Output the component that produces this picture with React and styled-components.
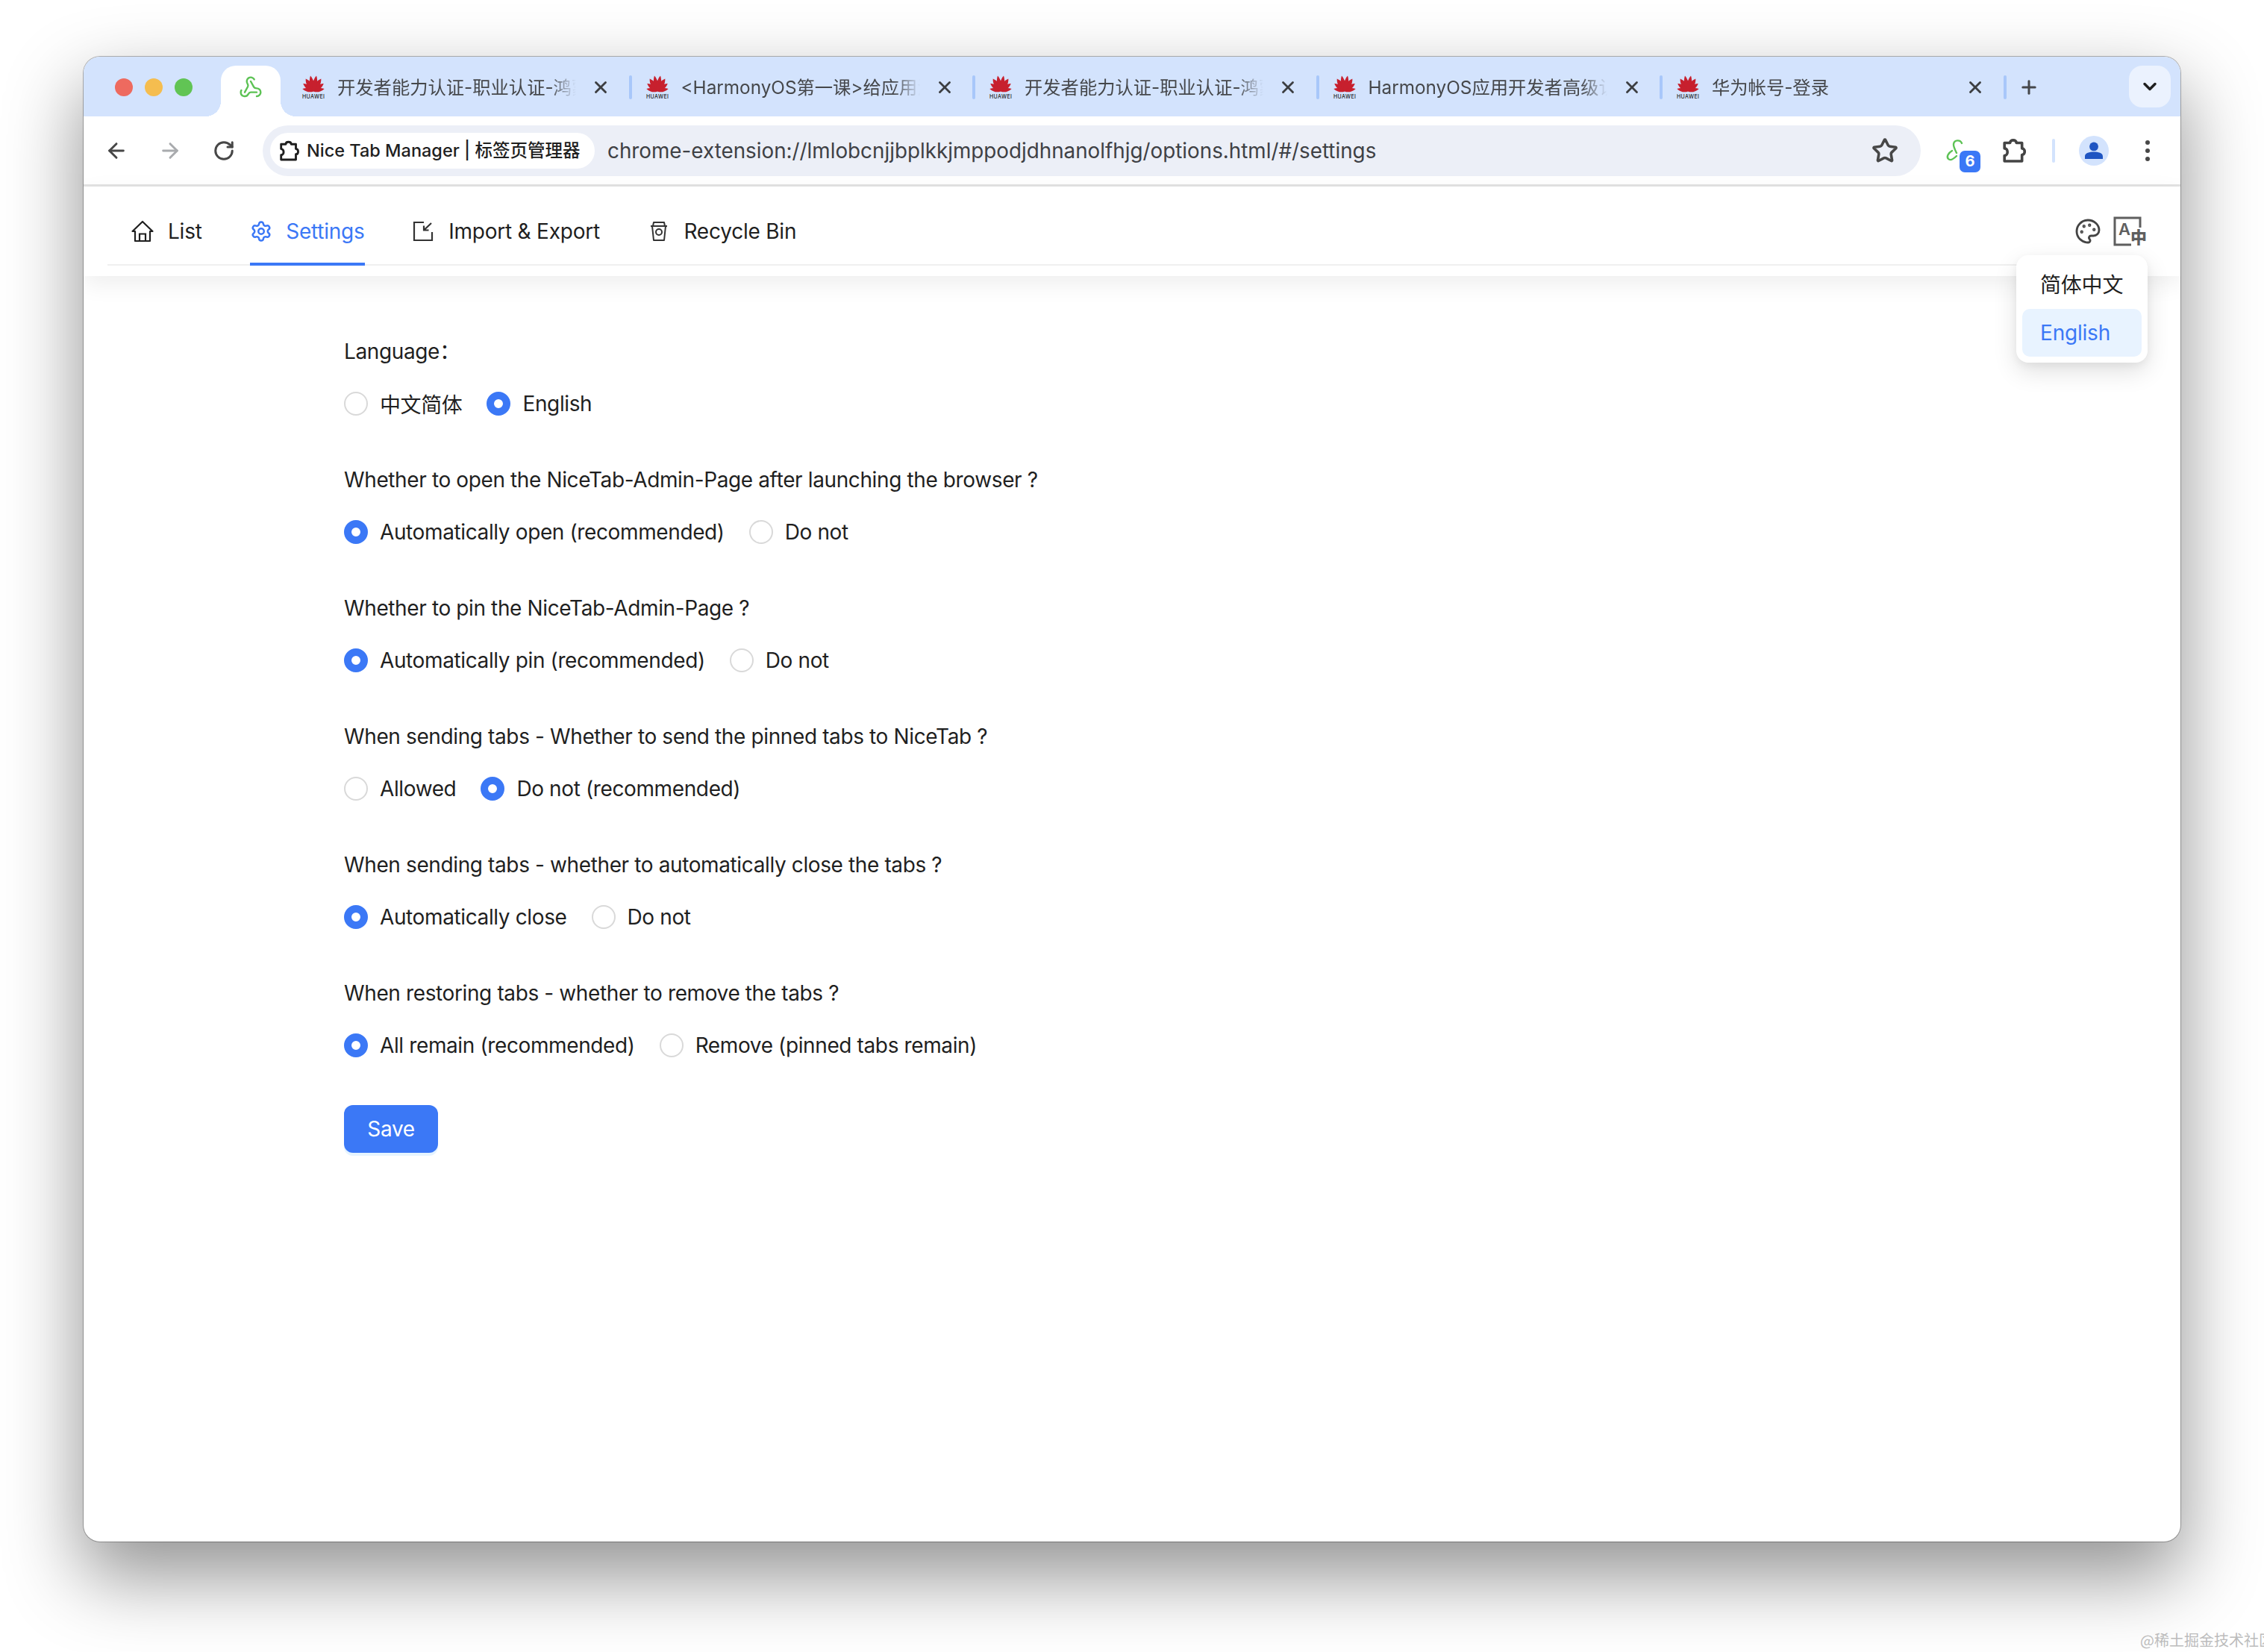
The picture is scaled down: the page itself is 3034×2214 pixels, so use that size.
import React from 'react';
import styled, { createGlobalStyle } from 'styled-components';
import {
  ArrowLeft, ArrowRight, RotateCw, Star, X, Plus, ChevronDown, Webhook, Settings, Palette,
} from 'lucide-react';

const BLUE = '#3b78f6';
const UI_FONT = 'Inter, "Noto Sans CJK SC", sans-serif';
const CHROME_FONT = 'Inter, "Noto Sans CJK SC", sans-serif';

const GlobalStyle = createGlobalStyle`
  html, body {
    margin: 0;
    padding: 0;
    background: #fff;
  }
  body {
    width: 3034px;
    height: 2214px;
    overflow: hidden;
    position: relative;
    font-family: ${UI_FONT};
  }
`;

const Desktop = styled.div`
  width: 3034px;
  height: 2214px;
  padding: 76px 0 0 112px;
  box-sizing: border-box;
`;

const Window = styled.div`
  width: 2810px;
  height: 1990px;
  border-radius: 22px;
  background: #fff;
  overflow: hidden;
  box-shadow: 0 0 0 1px rgba(0, 0, 0, 0.28), 0 44px 100px 4px rgba(0, 0, 0, 0.42);
`;

const TabStrip = styled.div`
  height: 80px;
  background: #d3e3fd;
  display: flex;
  align-items: flex-start;
  padding-top: 12px;
  box-sizing: border-box;
`;

const Lights = styled.div`
  width: 184px;
  height: 58px;
  display: flex;
  align-items: center;
  gap: 16px;
  padding-left: 42px;
  box-sizing: border-box;
`;

const Light = styled.span`
  width: 24px;
  height: 24px;
  border-radius: 50%;
  background: ${p => p.$color};
`;

const ActiveTab = styled.div`
  width: 80px;
  height: 68px;
  background: #fff;
  border-radius: 20px 20px 0 0;
  position: relative;
  display: flex;
  justify-content: center;
  padding-top: 13px;
  box-sizing: border-box;
  color: #5cc254;

  &::before, &::after {
    content: '';
    position: absolute;
    bottom: 0;
    width: 20px;
    height: 20px;
    background: #fff;
  }
  &::before {
    left: -20px;
    -webkit-mask: radial-gradient(circle 20px at 0 0, transparent 99%, #000 100%);
  }
  &::after {
    right: -20px;
    -webkit-mask: radial-gradient(circle 20px at 100% 0, transparent 99%, #000 100%);
  }
`;

const Tab = styled.div`
  width: 460.5px;
  height: 58px;
  flex: none;
  display: flex;
  align-items: center;
  padding-left: 18px;
  box-sizing: border-box;
  position: relative;
  color: #45474a;
`;

const FirstTabGap = styled.div`
  width: 10px;
  flex: none;
`;

const Title = styled.span`
  width: 320px;
  margin-left: 16px;
  overflow: hidden;
  white-space: nowrap;
  font: 400 24.3px/46px ${CHROME_FONT};
  -webkit-mask: linear-gradient(to right, #000 285px, transparent 320px);
`;

const TabClose = styled.span`
  margin-left: 20px;
  width: 26px;
  height: 26px;
  display: flex;
  align-items: center;
  justify-content: center;
  color: #3c3e41;
`;

const TabSep = styled.span`
  position: absolute;
  right: 0;
  top: 13px;
  width: 4px;
  height: 32px;
  border-radius: 2px;
  background: #a8c7fa;
`;

const NewTab = styled.div`
  width: 28px;
  height: 58px;
  margin-left: 16px;
  display: flex;
  align-items: center;
  color: #45474a;
`;

const ListButton = styled.div`
  width: 56px;
  height: 56px;
  margin-left: 120px;
  border-radius: 18px;
  background: #ebf2fe;
  display: flex;
  align-items: center;
  justify-content: center;
  color: #1f1f1f;
`;

const Toolbar = styled.div`
  height: 94px;
  box-sizing: border-box;
  border-bottom: 3px solid #e3e3e3;
  display: flex;
  align-items: center;
  padding: 1px 0 0 8px;
`;

const NavButton = styled.div`
  width: 72px;
  display: flex;
  justify-content: center;
  color: ${p => (p.$disabled ? '#a9abae' : '#474747')};
`;

const Omnibox = styled.div`
  width: 2222px;
  height: 68px;
  margin-left: 16px;
  border-radius: 34px;
  background: #eceff7;
  display: flex;
  align-items: center;
  padding: 0 10px;
  box-sizing: border-box;
  position: relative;
`;

const Chip = styled.div`
  width: 435px;
  height: 48px;
  border-radius: 24px;
  background: #fff;
  display: flex;
  align-items: center;
  padding-left: 12px;
  box-sizing: border-box;
  color: #1f1f1f;
  font: 500 23.5px/48px ${CHROME_FONT};
  white-space: nowrap;
`;

const ChipLabel = styled.span`
  margin-left: 10px;
`;

const Url = styled.span`
  margin-left: 17px;
  color: #3f4145;
  font: 400 27.8px/48px ${CHROME_FONT};
  white-space: nowrap;
`;

const StarSlot = styled.div`
  position: absolute;
  right: 30px;
  top: 16px;
  color: #474747;
  display: flex;
`;

const ToolSlot = styled.div`
  width: ${p => p.$w}px;
  display: flex;
  justify-content: center;
  align-items: center;
  position: relative;
  color: #444;
`;

const Badge = styled.span`
  position: absolute;
  left: 52px;
  top: 17px;
  width: 28px;
  height: 29px;
  border-radius: 7px;
  background: ${BLUE};
  color: #fff;
  font: 700 20px/29px ${CHROME_FONT};
  text-align: center;
`;

const ToolSep = styled.span`
  width: 4px;
  height: 32px;
  border-radius: 2px;
  background: #d3e3fd;
`;

const Avatar = styled.div`
  width: 40px;
  height: 40px;
  border-radius: 50%;
  background: #d3e3fd;
  display: flex;
  align-items: center;
  justify-content: center;
`;

const Dots = styled.div`
  display: flex;
  flex-direction: column;
  gap: 5px;
`;

const Dot = styled.span`
  width: 6px;
  height: 6px;
  border-radius: 50%;
  background: #474747;
`;

const Header = styled.header`
  position: relative;
  height: 120px;
  padding: 0 44px 0 32px;
  background: #fff;
  box-shadow: 0 10px 30px rgba(0, 0, 0, 0.07);
  box-sizing: border-box;
`;

const NavRow = styled.div`
  height: 106px;
  box-sizing: border-box;
  border-bottom: 2px solid #f0f0f0;
  display: flex;
  align-items: stretch;
  justify-content: space-between;
  padding: 0 2px 0 31px;
`;

const NavTabs = styled.nav`
  display: flex;
  gap: 64.5px;
`;

const NavTab = styled.div`
  display: flex;
  align-items: center;
  gap: 18px;
  padding-top: 16px;
  font-size: 28px;
  letter-spacing: -0.22px;
  color: ${p => (p.$active ? BLUE : '#1f1f1f')};
  position: relative;

  ${p => p.$active && `
    &::after {
      content: '';
      position: absolute;
      left: 0;
      right: 0;
      bottom: -2px;
      height: 4px;
      background: ${BLUE};
    }
  `}
`;

const Actions = styled.div`
  display: flex;
  align-items: center;
  gap: 16px;
  padding-top: 16px;
  color: #555;
`;

const Popup = styled.div`
  position: absolute;
  top: 92px;
  right: 44px;
  width: 176px;
  padding: 8px;
  box-sizing: border-box;
  background: #fff;
  border-radius: 16px;
  box-shadow: 0 12px 32px rgba(0, 0, 0, 0.12), 0 4px 12px rgba(0, 0, 0, 0.05);
  z-index: 2;
`;

const PopupItem = styled.div`
  height: 64px;
  padding: 0 24px;
  border-radius: 10px;
  line-height: 64px;
  font-size: 28px;
  letter-spacing: -0.2px;
  color: ${p => (p.$active ? BLUE : '#1f1f1f')};
  background: ${p => (p.$active ? '#e8f3ff' : 'transparent')};
`;

const Form = styled.form`
  padding: 79px 0 0 349px;
`;

const Group = styled.div`
  margin-bottom: 58px;
`;

const Question = styled.div`
  height: 44px;
  line-height: 44px;
  font-size: 28px;
  letter-spacing: -0.38px;
  color: #1f1f1f;
  margin-bottom: 26px;
`;

const Options = styled.div`
  height: 44px;
  display: flex;
  align-items: center;
  gap: 33px;
`;

const Option = styled.label`
  display: flex;
  align-items: center;
  gap: 16px;
  font-size: 28px;
  letter-spacing: -0.38px;
  color: #1f1f1f;
`;

const Radio = styled.span`
  width: 32px;
  height: 32px;
  border-radius: 50%;
  box-sizing: border-box;
  background: #fff;
  border: ${p => (p.$checked ? `10px solid ${BLUE}` : '2px solid #d9d9d9')};
`;

const SaveButton = styled.button`
  display: block;
  width: 126px;
  height: 64px;
  margin-top: 1px;
  border: 0;
  border-radius: 12px;
  background: ${BLUE};
  color: #fff;
  font: 400 28px ${UI_FONT};
  letter-spacing: -0.38px;
  box-shadow: 0 4px 0 rgba(5, 145, 255, 0.1);
`;

const Watermark = styled.div`
  position: absolute;
  left: 2868px;
  top: 2186px;
  font: 400 20px/24px "Noto Sans CJK SC", sans-serif;
  color: #bcbcbc;
  white-space: nowrap;
`;

const PETALS = [
  { a: -78, d: 'M15.6 21 C12.5 17 13 11 16 6 C19 11 19.5 17 16.4 21 Z' },
  { a: -54, d: 'M15.6 21 C12 16 12.5 9 16 4 C19.5 9 20 16 16.4 21 Z' },
  { a: -32, d: 'M15.6 21 C11.5 15 12 7 16 1.5 C20 7 20.5 15 16.4 21 Z' },
  { a: -11, d: 'M15.6 21 C12 15 12.5 6 16 0 C19.5 6 20 15 16.4 21 Z' },
];

const HuaweiLogo = () => (
  <svg width="32" height="32" viewBox="0 0 32 32">
    {PETALS.map(({ a, d }) => (
      <g key={a} fill="#c7202e">
        <path d={d} transform={`rotate(${a} 16 21)`} />
        <path d={d} transform={`rotate(${-a} 16 21)`} />
      </g>
    ))}
    <text x="16" y="31" textAnchor="middle" textLength="30" fontFamily="Inter, sans-serif" fontSize="7" fontWeight="500" fill="#222">HUAWEI</text>
  </svg>
);

const ExtensionIcon = ({ size, strokeWidth }) => (
  <svg width={size} height={size * 1.1} viewBox="0 0 30 33" fill="none" stroke="currentColor" strokeWidth={strokeWidth} strokeLinejoin="round">
    <path d="M3 7 H10 C10 2.5 18 2.5 18 7 H25 V14 C29.5 14 29.5 22 25 22 V30 H3 V23 C8 23 8 14 3 14 Z" />
  </svg>
);

// the toolbar pin of the extension, half hidden by its badge
const PinnedHook = () => (
  <svg width="26" height="34" viewBox="0 0 26 34" fill="none" stroke="#5cc254" strokeWidth="2.4" strokeLinecap="round">
    <path d="M22 7 C20 2 12 2 11 8 C10.5 11 12 14 15 20" />
    <path d="M9 17 C4 20 1 25 4 28 C7 31 11 28 15 24" />
  </svg>
);

const PersonIcon = () => (
  <svg width="24" height="24" viewBox="0 0 26 26" fill="#1f55c2">
    <circle cx="13" cy="7" r="6.4" />
    <path d="M0 25 V21 C0 16 7 14.5 13 14.5 C19 14.5 26 16 26 21 V25 Z" />
  </svg>
);

const HomeIcon = () => (
  <svg width="32" height="32" viewBox="0 0 32 32" fill="none" stroke="#1f1f1f" strokeWidth="2.2">
    <path d="M2.5 16 L16 3 L29.5 16 H26 V29 H6 V16 Z" strokeLinejoin="round" />
    <path d="M12 29 V19.5 H20 V29" />
  </svg>
);

const ImportIcon = () => (
  <svg width="30" height="28" viewBox="0 0 30 28" fill="none" stroke="#333" strokeWidth="2.2">
    <path d="M15 2 H2 V26 H26 V15" />
    <path d="M25 3 L15 12.5 M15 6.5 V12.5 H21.5" />
  </svg>
);

const CupIcon = () => (
  <svg width="30" height="28" viewBox="0 0 30 28" fill="none" stroke="#333" strokeWidth="2">
    <path d="M4 7 H26 M7 7 L8 2 H22 L23 7 M6 7 L8 26 H22 L24 7" strokeLinejoin="round" />
    <circle cx="15" cy="15" r="4" />
  </svg>
);

const TranslateIcon = () => (
  <svg width="44" height="40" viewBox="0 0 44 40" fill="none">
    <path d="M36 15 V2 H2 V38 H24" stroke="#5f5f5f" strokeWidth="3" />
    <text x="7" y="25" fontFamily="Inter, sans-serif" fontSize="22" fontWeight="600" fill="#5f5f5f">A</text>
    <text x="23" y="36" fontFamily='"Noto Sans CJK SC", sans-serif' fontSize="22" fontWeight="900" fill="#5f5f5f">中</text>
  </svg>
);

const TABS = [
  '开发者能力认证-职业认证-鸿蒙',
  '<HarmonyOS第一课>给应用添加通知',
  '开发者能力认证-职业认证-鸿蒙',
  'HarmonyOS应用开发者高级认证',
  '华为帐号-登录',
];

const QUESTIONS = [
  {
    label: 'Language：',
    options: [['中文简体', false], ['English', true]],
  },
  {
    label: 'Whether to open the NiceTab-Admin-Page after launching the browser ?',
    options: [['Automatically open (recommended)', true], ['Do not', false]],
  },
  {
    label: 'Whether to pin the NiceTab-Admin-Page ?',
    options: [['Automatically pin (recommended)', true], ['Do not', false]],
  },
  {
    label: 'When sending tabs - Whether to send the pinned tabs to NiceTab ?',
    options: [['Allowed', false], ['Do not (recommended)', true]],
  },
  {
    label: 'When sending tabs - whether to automatically close the tabs ?',
    options: [['Automatically close', true], ['Do not', false]],
  },
  {
    label: 'When restoring tabs - whether to remove the tabs ?',
    options: [['All remain (recommended)', true], ['Remove (pinned tabs remain)', false]],
  },
];

const App = () => (
  <>
    <GlobalStyle />
    <Desktop>
      <Window>
        <TabStrip>
          <Lights>
            <Light $color="#ee6a5f" />
            <Light $color="#f5bd4f" />
            <Light $color="#61c454" />
          </Lights>
          <ActiveTab>
            <Webhook size={32} strokeWidth={1.8} />
          </ActiveTab>
          <FirstTabGap />
          {TABS.map((t, i) => (
            <Tab key={`${t}${i}`}>
              <HuaweiLogo />
              <Title>{t}</Title>
              <TabClose><X size={26} strokeWidth={2.6} /></TabClose>
              <TabSep />
            </Tab>
          ))}
          <NewTab><Plus size={30} strokeWidth={2.6} /></NewTab>
          <ListButton><ChevronDown size={28} strokeWidth={3} /></ListButton>
        </TabStrip>
        <Toolbar>
          <NavButton><ArrowLeft size={32} strokeWidth={2.2} /></NavButton>
          <NavButton $disabled><ArrowRight size={32} strokeWidth={2.2} /></NavButton>
          <NavButton><RotateCw size={30} strokeWidth={2.4} /></NavButton>
          <Omnibox>
            <Chip>
              <ExtensionIcon size={27} strokeWidth={3.2} />
              <ChipLabel>Nice Tab Manager | 标签页管理器</ChipLabel>
            </Chip>
            <Url>chrome-extension://lmlobcnjjbplkkjmppodjdhnanolfhjg/options.html/#/settings</Url>
            <StarSlot><Star size={36} strokeWidth={2.4} /></StarSlot>
          </Omnibox>
          <ToolSlot $w={92}>
            <PinnedHook />
            <Badge>6</Badge>
          </ToolSlot>
          <ToolSlot $w={66}><ExtensionIcon size={32} strokeWidth={3.4} /></ToolSlot>
          <ToolSlot $w={40}><ToolSep /></ToolSlot>
          <ToolSlot $w={68}><Avatar><PersonIcon /></Avatar></ToolSlot>
          <ToolSlot $w={76}>
            <Dots><Dot /><Dot /><Dot /></Dots>
          </ToolSlot>
        </Toolbar>
        <Header>
          <NavRow>
            <NavTabs>
              <NavTab><HomeIcon />List</NavTab>
              <NavTab $active><Settings size={30} strokeWidth={2} />Settings</NavTab>
              <NavTab><ImportIcon />Import &amp; Export</NavTab>
              <NavTab><CupIcon />Recycle Bin</NavTab>
            </NavTabs>
            <Actions>
              <Palette size={36} strokeWidth={1.9} color="#444" />
              <TranslateIcon />
            </Actions>
          </NavRow>
          <Popup>
            <PopupItem>简体中文</PopupItem>
            <PopupItem $active>English</PopupItem>
          </Popup>
        </Header>
        <Form>
          {QUESTIONS.map(q => (
            <Group key={q.label}>
              <Question>{q.label}</Question>
              <Options>
                {q.options.map(([text, checked]) => (
                  <Option key={text}>
                    <Radio $checked={checked} />
                    {text}
                  </Option>
                ))}
              </Options>
            </Group>
          ))}
          <SaveButton type="button">Save</SaveButton>
        </Form>
      </Window>
      <Watermark>@稀土掘金技术社区</Watermark>
    </Desktop>
  </>
);

export default App;
